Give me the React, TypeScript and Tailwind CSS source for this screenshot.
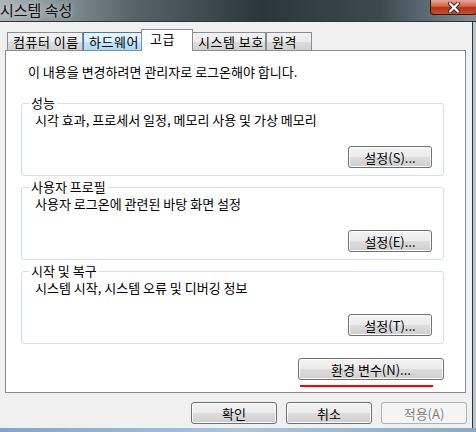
import React from "react";

const font = {
  fontFamily: '"Noto Sans CJK KR", "Liberation Sans", sans-serif',
};

function Tab({
  label,
  active,
  hover,
  width,
}: {
  label: string;
  active?: boolean;
  hover?: boolean;
  width: string;
}) {
  if (active) {
    return (
      <div
        className={`${width} h-[22px] -mx-[1px] relative z-10 bg-white border border-b-0 border-[#898c95] pl-[8px] text-[13px] tracking-[0.5px] leading-[18px] text-black`}
      >
        {label}
      </div>
    );
  }
  return (
    <div
      className={`${width} h-[19px] mt-[3px] border border-b-0 ${
        hover
          ? "border-[#3c7fb1] bg-[linear-gradient(#eaf6fd,#d9f0fc_50%,#bee6fd_50%,#a7d9f5)]"
          : "border-[#898c95] bg-[linear-gradient(#f2f2f2,#ebebeb_50%,#dddddd_50%,#cfcfcf)]"
      } pl-[5px] text-[13px] tracking-[0.5px] leading-[18px] text-black whitespace-nowrap`}
    >
      {label}
    </div>
  );
}

function Btn({
  label,
  width,
  variant = "normal",
}: {
  label: string;
  width: string;
  variant?: "normal" | "default" | "disabled";
}) {
  const cls =
    variant === "default"
      ? "border-[#3c7fb1] bg-[linear-gradient(#eaf6fd,#d9f0fc_50%,#bee6fd_50%,#a7d9f5)] shadow-[inset_0_0_0_1px_#c8e6f8] text-black"
      : variant === "disabled"
      ? "border-[#adb2b5] bg-[#f4f4f4] text-[#838383]"
      : "border-[#707070] bg-[linear-gradient(#f2f2f2,#ebebeb_50%,#dddddd_50%,#cfcfcf)] shadow-[inset_0_0_0_1px_#fcfcfc] text-black";
  return (
    <div
      className={`${width} h-[22px] rounded-[3px] border ${cls} flex items-center justify-center text-[13px] leading-none`}
    >
      {label}
    </div>
  );
}

function Group({
  title,
  desc,
  button,
  className = "",
}: {
  title: string;
  desc: string;
  button: string;
  className?: string;
}) {
  return (
    <fieldset
      className={`w-[423px] border border-[#d5dfe5] rounded-[3px] p-0 ${className}`}
    >
      <legend className="ml-[7px] px-[2px] text-[13px] leading-[16px] text-black">
        {title}
      </legend>
      <div className="pl-[13px] pt-[1px] text-[13px] leading-[16px] text-black">
        {desc}
      </div>
      <div className="flex justify-end pr-[11px] mt-[18px] pb-[7px]">
        <Btn label={button} width="w-[84px]" />
      </div>
    </fieldset>
  );
}

export default function App() {
  return (
    <div
      className="w-[476px] h-[432px] bg-[#8fa6b6] overflow-hidden flex flex-col"
      style={font}
    >
      {/* title bar */}
      <div className="h-[21px] flex justify-between bg-[linear-gradient(90deg,#aab4b8,#56646a_28%,#2b363b_55%,#3c4a50_80%,#7f8f96)]">
        <div className="text-[15px] leading-[20px] text-[#111] [text-shadow:0_0_6px_rgba(255,255,255,0.8)]">
          시스템 속성
        </div>
        <div className="w-[47px] h-[15px] mr-[-1px] rounded-b-[4px] border border-t-0 border-[#3a1208] bg-[linear-gradient(#e8a696,#d0634b_45%,#b8300f_55%,#c9502e)] flex items-center justify-center">
          <svg width="14" height="11" viewBox="0 0 14 11">
            <path
              d="M3 1.5 L11 9.5 M11 1.5 L3 9.5"
              stroke="#3b2a2a"
              strokeWidth="4"
              strokeLinecap="round"
            />
            <path
              d="M3 1.5 L11 9.5 M11 1.5 L3 9.5"
              stroke="#ffffff"
              strokeWidth="2.2"
              strokeLinecap="round"
            />
          </svg>
        </div>
      </div>
      <div className="h-[1px] bg-[#2e3438]" />

      {/* window body */}
      <div className="flex-1 flex">
        <div className="w-[473px] bg-[#f0f0f0] border-r border-[#2f3538] flex flex-col">
          <div className="flex pl-[7px] pt-[7px]">
            <Tab label="컴퓨터 이름" width="w-[76px]" />
            <Tab label="하드웨어" hover width="w-[59px]" />
            <Tab label="고급" active width="w-[52px]" />
            <Tab label="시스템 보호" width="w-[74px]" />
            <Tab label="원격" width="w-[46px]" />
          </div>

          <div className="ml-[5px] mt-[-1px] w-[461px] h-[343px] bg-white border border-[#898c95] flex flex-col pl-[15px] pt-[13px]">
            <div className="pl-[7px] text-[13px] leading-[16px] text-black">
              이 내용을 변경하려면 관리자로 로그온해야 합니다.
            </div>
            <Group
              className="mt-[15px]"
              title="성능"
              desc="시각 효과, 프로세서 일정, 메모리 사용 및 가상 메모리"
              button="설정(S)..."
            />
            <Group
              className="mt-[3px]"
              title="사용자 프로필"
              desc="사용자 로그온에 관련된 바탕 화면 설정"
              button="설정(E)..."
            />
            <Group
              className="mt-[3px]"
              title="시작 및 복구"
              desc="시스템 시작, 시스템 오류 및 디버깅 정보"
              button="설정(T)..."
            />
            <div className="w-[423px] flex flex-col items-end mt-[14px]">
              <Btn label="환경 변수(N)..." width="w-[146px]" />
              <div className="mt-[5px] mr-[11px] w-[133px] h-[2px] bg-[#ff0000]" />
            </div>
          </div>

          <div className="flex justify-end gap-[9px] pr-[5px] mt-[9px]">
            <Btn label="확인" width="w-[86px]" />
            <Btn label="취소" width="w-[86px]" />
            <Btn label="적용(A)" width="w-[86px]" variant="disabled" />
          </div>
          <div className="flex-1" />
        </div>
        <div className="flex-1 bg-[#b9c6cf]" />
      </div>
      <div className="h-[4px] bg-[linear-gradient(90deg,#7fa6c8,#a9c6dd_50%,#86aac7)]" />
    </div>
  );
}
